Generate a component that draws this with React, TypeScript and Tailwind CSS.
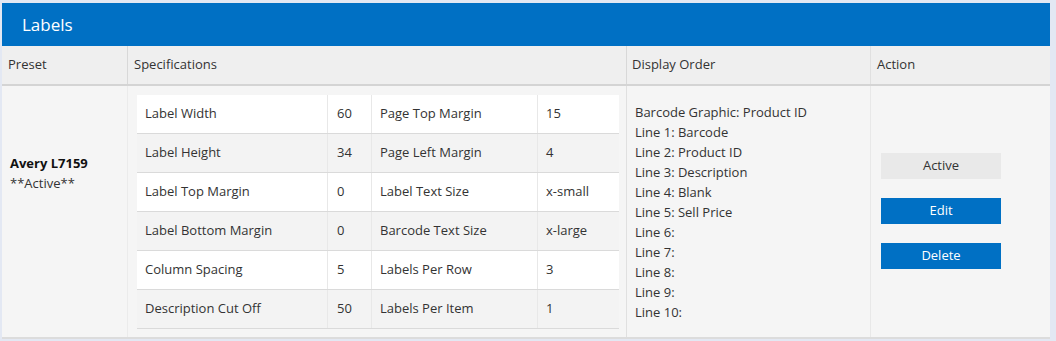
const specs = [
  ['Label Width', '60', 'Page Top Margin', '15'],
  ['Label Height', '34', 'Page Left Margin', '4'],
  ['Label Top Margin', '0', 'Label Text Size', 'x-small'],
  ['Label Bottom Margin', '0', 'Barcode Text Size', 'x-large'],
  ['Column Spacing', '5', 'Labels Per Row', '3'],
  ['Description Cut Off', '50', 'Labels Per Item', '1'],
];

const displayOrder = [
  'Barcode Graphic: Product ID',
  'Line 1: Barcode',
  'Line 2: Product ID',
  'Line 3: Description',
  'Line 4: Blank',
  'Line 5: Sell Price',
  'Line 6:',
  'Line 7:',
  'Line 8:',
  'Line 9:',
  'Line 10:',
];

export default function App() {
  return (
    <div
      className="w-[1056px] h-[341px] bg-[#e3e8f3] pt-[3px] pl-[2px] pr-[6px] overflow-hidden text-[13px] text-[#333]"
      style={{ fontFamily: '"Open Sans", "Noto Sans", sans-serif' }}
    >
      {/* Title bar */}
      <div className="h-[43px] bg-[#0070c4] flex items-center pl-5">
        <h1 className="text-white text-[17px]">Labels</h1>
      </div>

      {/* Column headers */}
      <div className="flex h-[40px] bg-[#efefef] border-b-2 border-[#d4d4d4]">
        <div className="w-[126px] flex items-center pl-[6px] border-r border-[#d8d8d8]">Preset</div>
        <div className="w-[499px] flex items-center pl-[6px] border-r border-[#d8d8d8]">Specifications</div>
        <div className="w-[244px] flex items-center pl-[5px] border-r border-[#e0e0e0]">Display Order</div>
        <div className="flex-1 flex items-center pl-[6px]">Action</div>
      </div>

      {/* Body row */}
      <div className="flex h-[253px] bg-[#f5f5f5] border-b-2 border-[#dcdcdc]">
        <div className="w-[126px] pl-2 pt-[67px] border-r border-[#ebebeb]">
          <div className="font-bold text-[#111] leading-5">Avery L7159</div>
          <div className="leading-5">**Active**</div>
        </div>

        <div className="w-[499px] pl-[9px] pt-[9px] border-r border-[#e0e0e0]">
          <div className="w-[482px]">
            {specs.map((r, i) => (
              <div
                key={i}
                className={`flex h-[39px] border-b border-[#dadada] ${i % 2 === 0 ? 'bg-white' : 'bg-[#f3f3f3]'}`}
              >
                <div className="w-[191px] flex items-center pl-2 border-r border-[#e8e8e8]">{r[0]}</div>
                <div className="w-[44px] flex items-center pl-[9px] border-r border-[#e8e8e8]">{r[1]}</div>
                <div className="w-[166px] flex items-center pl-2 border-r border-[#e8e8e8]">{r[2]}</div>
                <div className="flex-1 flex items-center pl-2">{r[3]}</div>
              </div>
            ))}
          </div>
        </div>

        <div className="w-[244px] pl-[8px] pt-[16px] border-r border-[#e8e8e8]">
          {displayOrder.map((l) => (
            <div key={l} className="leading-5">{l}</div>
          ))}
        </div>

        <div className="flex-1 flex flex-col pl-[10px] pt-[67px] gap-[19px]">
          <button className="w-[120px] h-[26px] bg-[#e9e9e9] text-[#333]">Active</button>
          <button className="w-[120px] h-[26px] bg-[#0070c4] text-white">Edit</button>
          <button className="w-[120px] h-[26px] bg-[#0070c4] text-white">Delete</button>
        </div>
      </div>
    </div>
  );
}
